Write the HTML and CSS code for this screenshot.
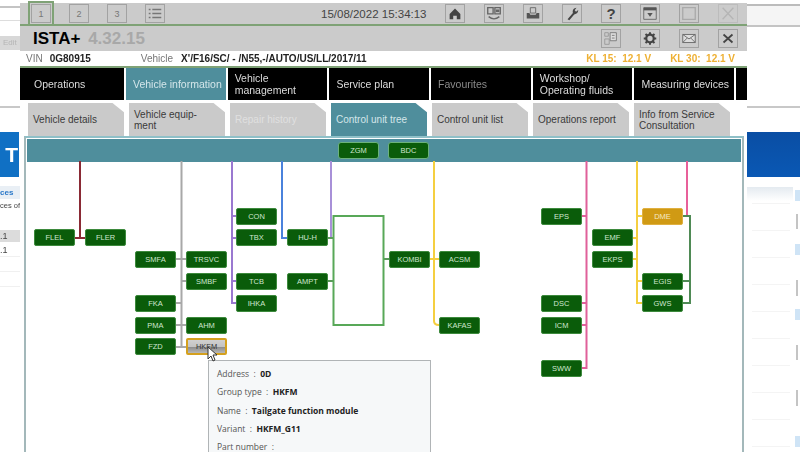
FILE: index.html
```html
<!DOCTYPE html>
<html lang="en">
<head>
  <meta charset="UTF-8">
  <title>ISTA+</title>
  <link rel="stylesheet" href="styles.css">
</head>
<body>
<div class="page">

  <!-- what is visible of the window behind, left -->
  <div class="side-left">
    <div class="sl-lines"></div>
    <div class="sl-edit">Edit</div>
    <div class="sl-rule"></div>
    <div class="sl-logo">T</div>
    <div class="sl-link">ces</div>
    <div class="sl-text">ces of</div>
    <div class="sl-sel">.1</div>
    <div class="sl-row">.1</div>
    <div class="sl-row"></div>
    <div class="sl-row"></div>
  </div>

  <div class="app">
    <div class="topbar">
      <div class="tools-left">
        <div class="tool tool-active">1</div>
        <div class="tool">2</div>
        <div class="tool">3</div>
        <div class="tool">
          <svg viewBox="0 0 20 19" width="18" height="17"><path d="M3 5h2M7 5h10M3 9.500h2M7 9.500h10M3 14h2M7 14h10" stroke="#777" stroke-width="1.500" fill="none"/></svg>
        </div>
      </div>
      <div class="clock">15/08/2022 15:34:13</div>
      <div class="tools-right">
        <div class="tool"><svg viewBox="0 0 20 19" width="18" height="17"><path d="M10 4 4 10v6h4v-4h4v4h4v-6z" fill="#444"/></svg></div>
        <div class="tool"><svg viewBox="0 0 20 19" width="18" height="17"><path d="M3 3h6v7H3zM11 3h6v7h-6z" fill="none" stroke="#666" stroke-width="1.500"/><path d="M4 13q6 5 12 0" fill="none" stroke="#666" stroke-width="1.500"/><path d="M12 5h4v3h-4z" fill="#666"/></svg></div>
        <div class="tool"><svg viewBox="0 0 20 19" width="18" height="17"><path d="M7 3h6v6H7z" fill="none" stroke="#666"/><path d="M3 9h3l1 2h6l1-2h3v6H3z" fill="#555"/></svg></div>
        <div class="tool"><svg viewBox="0 0 20 19" width="18" height="17"><path d="M5 16 11 9q-1-4 2-5.500l2-.5-2 3 1.500 1.500 2.500-2q0 4-4.500 5L7 17z" fill="#444"/></svg></div>
        <div class="tool tool-help">?</div>
        <div class="tool"><svg viewBox="0 0 20 19" width="18" height="17"><path d="M3 3h14v13H3z" fill="none" stroke="#666"/><path d="M3 3h14v3H3z" fill="#555"/><path d="M7 9h6l-3 4z" fill="#555"/></svg></div>
        <div class="tool"><svg viewBox="0 0 20 19" width="18" height="17"><path d="M3 3h14v13H3z" fill="none" stroke="#aaa" stroke-width="1.500"/></svg></div>
        <div class="tool tool-off"><svg viewBox="0 0 20 19" width="18" height="17"><path d="M4 3l12 13M16 3 4 16" stroke="#b5b5b5" stroke-width="1.500"/></svg></div>
      </div>
    </div>

    <div class="titlebar">
      <div class="brand">ISTA+ <span class="brand-version">4.32.15</span></div>
      <div class="tools-title">
        <div class="tool"><svg viewBox="0 0 20 19" width="18" height="17"><path d="M9 3h7v9H9z" fill="#ddd" stroke="#777"/><path d="M11 6h3M11 9h3" stroke="#777"/><path d="M3 3h4v4H3zM3 10h5v6H3z" fill="none" stroke="#999"/></svg></div>
        <div class="tool"><svg viewBox="0 0 20 19" width="18" height="17"><circle cx="10" cy="9.500" r="4.200" fill="none" stroke="#444" stroke-width="2.500"/><path d="M10 2.500v3M10 13.500v3M3 9.500h3M14 9.500h3M5 4.500l2 2M13 12.500l2 2M15 4.500l-2 2M7 12.500l-2 2" stroke="#444" stroke-width="2.200"/></svg></div>
        <div class="tool"><svg viewBox="0 0 20 19" width="18" height="17"><path d="M3 5h14v9H3z" fill="#ddd" stroke="#666"/><path d="M3 5l7 5 7-5M3 14l5-5M17 14l-5-5" fill="none" stroke="#666"/></svg></div>
        <div class="tool"><svg viewBox="0 0 20 19" width="18" height="17"><path d="M5 5l10 9M15 5 5 14" stroke="#444" stroke-width="2"/></svg></div>
      </div>
    </div>

    <div class="inforow">
      <span class="info-label info-vin">VIN</span>
      <span class="info-value info-vin-value">0G80915</span>
      <span class="info-label info-vehicle">Vehicle</span>
      <span class="info-value">X'/F16/SC/ - /N55,-/AUTO/US/LL/2017/11</span>
      <span class="kl kl-15">KL 15:&nbsp; 12.1 V</span>
      <span class="kl kl-30">KL 30:&nbsp; 12.1 V</span>
    </div>

    <div class="nav">
      <div class="nav-tab nav-first">Operations</div>
      <div class="nav-tab nav-active">Vehicle information</div>
      <div class="nav-tab">Vehicle<br>management</div>
      <div class="nav-tab">Service plan</div>
      <div class="nav-tab nav-off">Favourites</div>
      <div class="nav-tab">Workshop/<br>Operating fluids</div>
      <div class="nav-tab">Measuring devices</div>
      <div class="nav-tab nav-end"></div>
    </div>

    <div class="subnav">
      <div class="sub-tab">Vehicle details</div>
      <div class="sub-tab">Vehicle equip-<br>ment</div>
      <div class="sub-tab sub-off">Repair history</div>
      <div class="sub-tab sub-active">Control unit tree</div>
      <div class="sub-tab">Control unit list</div>
      <div class="sub-tab">Operations report</div>
      <div class="sub-tab">Info from Service<br>Consultation</div>
    </div>

    <div class="frame">
      <div class="band"></div>
      <div class="canvas">
        <!-- connectors, coordinates are the ones of the screenshot -->
        <svg class="wires" viewBox="26 138 718 314" width="718" height="314">
          <g fill="none" stroke-width="2">
            <path d="M80 161v77M75 238h10" stroke="#8a2a35"/>
            <path d="M181.500 161v186M176 259h10M181 281h5M176 303h6M176 325h10M176 347h10" stroke="#a8a8a8"/>
            <path d="M232 161v142h4M232 216h4M232 238h4M232 281h4" stroke="#9a78d0"/>
            <path d="M282 161v77h5" stroke="#4a82dc"/>
            <path d="M331 161v77h-3" stroke="#a890d8"/>
            <path d="M328 238h5M328 281h5M384 259h5" stroke="#5a9a5a"/>
            <path d="M434 161v160q0 4 5 4M430 259h9" stroke="#f5cf40"/>
            <path d="M586.500 161v207h-5M582 216h5M582 303h5M582 325h5" stroke="#e0609a"/>
            <path d="M637 161v142h5M632 238h5M632 259h5M637 216h5M637 281h5" stroke="#f5cf40"/>
            <path d="M687 161v55h-4" stroke="#e8609a"/>
            <path d="M683 216h7v87h-7M683 281h7" stroke="#4f8a55"/>
            <rect x="333.500" y="216" width="50" height="109" stroke="#58a858"/>
          </g>
        </svg>

        <div class="node col-a row-b">FLEL</div>
        <div class="node col-b row-b">FLER</div>
        <div class="node col-c row-c">SMFA</div>
        <div class="node col-d row-c">TRSVC</div>
        <div class="node col-d row-d">SMBF</div>
        <div class="node col-c row-e">FKA</div>
        <div class="node col-c row-f">PMA</div>
        <div class="node col-d row-f">AHM</div>
        <div class="node col-c row-g">FZD</div>
        <div class="node node-selected col-d row-g">HKFM</div>
        <div class="node col-e row-a">CON</div>
        <div class="node col-e row-b">TBX</div>
        <div class="node col-e row-d">TCB</div>
        <div class="node col-e row-e">IHKA</div>
        <div class="node col-f row-b">HU-H</div>
        <div class="node col-f row-d">AMPT</div>
        <div class="node col-g row-c">KOMBI</div>
        <div class="node col-h row-c">ACSM</div>
        <div class="node col-h row-f">KAFAS</div>
        <div class="node col-i row-a">EPS</div>
        <div class="node col-i row-e">DSC</div>
        <div class="node col-i row-f">ICM</div>
        <div class="node col-i row-h">SWW</div>
        <div class="node col-j row-b">EMF</div>
        <div class="node col-j row-c">EKPS</div>
        <div class="node node-amber col-k row-a">DME</div>
        <div class="node col-k row-d">EGIS</div>
        <div class="node col-k row-e">GWS</div>
        <div class="node node-gateway gw-zgm">ZGM</div>
        <div class="node node-gateway gw-bdc">BDC</div>

        <div class="tip">
          <div class="tip-row">Address &nbsp;: &nbsp;<b>0D</b></div>
          <div class="tip-row">Group type &nbsp;: &nbsp;<b>HKFM</b></div>
          <div class="tip-row">Name &nbsp;: &nbsp;<b>Tailgate function module</b></div>
          <div class="tip-row">Variant &nbsp;: &nbsp;<b>HKFM_G11</b></div>
          <div class="tip-row">Part number &nbsp;:</div>
        </div>

        <svg class="pointer" viewBox="0 0 12 17" width="12" height="17"><path d="M1 1v12l3-3 2 5 2-1-2-5h4z" fill="#fff" stroke="#333"/></svg>
      </div>
    </div>
  </div>

  <!-- window behind, right -->
  <div class="side-right">
    <div class="sr-top"></div>
    <div class="sr-rule"></div>
    <div class="sr-logo"></div>
    <div class="sr-body">
      <div class="sr-head"></div>
      <i class="chip"></i>
      <i class="bar gap-s"></i>
      <i class="chip gap-m"></i>
      <i class="bar gap-l"></i>
      <i class="chip gap-s"></i>
      <i class="bar gap-l"></i>
      <i class="bar gap-xl"></i>
      <i class="chip gap-xl"></i>
    </div>
  </div>
</div>
</body>
</html>
```

FILE: styles.css
```css
* {
  box-sizing: border-box;
}

html, body {
  margin: 0;
  height: 100%;
  overflow: hidden;
  background-color: white;
}

/* the reference is a video frame, everything is a bit soft */
.page {
  display: flex;
  width: 800px;
  height: 452px;
  overflow: hidden;
  font-family: "Liberation Sans", Arial, sans-serif;
  filter: blur(0.45px);
}

/* left sliver */
.side-left {
  width: 20px;
  flex: none;
  color: #444;
  font-size: 9px;
  overflow: hidden;
}

.sl-lines {
  height: 33px;
  margin-top: 6px;
  border-top: 2px solid #c4c4c4;
  border-bottom: 1px solid #ddd;
  background: linear-gradient(#fff 40%, #ddd 40%, #ddd 45%, #fff 45%);
}

.sl-edit {
  height: 14px;
  margin-top: -3px;
  padding-left: 3px;
  background-color: #d8d8d8;
  color: #b5b5b5;
  font-size: 8px;
  line-height: 14px;
}

.sl-rule {
  height: 2px;
  margin-top: 56px;
  background-color: #c8c8c8;
}

.sl-logo {
  width: 19px;
  height: 45px;
  margin-top: 24px;
  padding-right: 1px;
  background-color: #1070c4;
  color: white;
  font-size: 21px;
  font-weight: bold;
  line-height: 45px;
  text-align: right;
}

.sl-link {
  height: 13px;
  margin-top: 9px;
  background-color: #e9eff5;
  color: #2a78c8;
  font-size: 8px;
  font-weight: bold;
  line-height: 13px;
  text-align: right;
  padding-right: 7px;
}

.sl-text {
  height: 13px;
  margin-top: 2px;
  font-size: 7.500px;
  text-align: right;
  white-space: nowrap;
}

.sl-sel {
  height: 12px;
  margin-top: 16px;
  background-color: #dcdcdc;
  line-height: 12px;
}

.sl-row {
  height: 14px;
  margin-top: 1px;
  border-bottom: 1px solid #f0f0f0;
  line-height: 14px;
}

/* app window */
.app {
  width: 727px;
  flex: none;
  height: 452px;
  margin-top: 3px;
}

.topbar {
  display: flex;
  align-items: center;
  height: 23px;
  padding-left: 11px;
  background-color: #cbcbcb;
  border-bottom: 2px solid #7fa276;
}

.tools-left, .tools-right, .tools-title {
  display: flex;
  gap: 18px;
}

.tools-right, .tools-title {
  gap: 19px;
}

.tools-right {
  margin-left: auto;
  margin-right: 9px;
}

.tool {
  display: flex;
  align-items: center;
  justify-content: center;
  width: 20px;
  height: 19px;
  border: 1px solid #a2a2a2;
  color: #777;
  font-size: 9px;
}

.tool-active {
  outline: 2px solid #7fa276;
  outline-offset: 1px;
}

.tool-help {
  color: #444;
  font-size: 15px;
  font-weight: bold;
}

.tool-off {
  border-color: #bcbcbc;
}

.clock {
  margin-left: 156px;
  color: #444;
  font-size: 11.500px;
}

.titlebar {
  display: flex;
  align-items: center;
  height: 25px;
  padding-left: 13px;
  background-color: #cbcbcb;
}

.brand {
  color: black;
  font-size: 17px;
  font-weight: bold;
}

.brand-version {
  margin-left: 3px;
  color: #a8a8a8;
}

.tools-title {
  margin-left: auto;
  margin-right: 9px;
}

.inforow {
  display: flex;
  align-items: center;
  height: 15px;
  padding-left: 6px;
  background-color: white;
  font-size: 10px;
  white-space: nowrap;
}

.info-label {
  color: #777;
}

.info-value {
  color: #222;
  font-weight: bold;
}

.info-vin-value {
  margin-left: 7px;
}

.info-vehicle {
  margin-left: 50px;
  margin-right: 8px;
}

.kl {
  color: #eeb033;
  font-weight: bold;
}

.kl-15 {
  margin-left: auto;
}

.kl-30 {
  margin-left: 19px;
  margin-right: 12px;
}

.nav {
  display: flex;
  gap: 2px;
  height: 34px;
  border-top: 2px solid #7fa276;
}

.nav-tab {
  display: flex;
  align-items: center;
  width: 99.700px;
  flex: none;
  padding-left: 7px;
  background-color: black;
  color: #dcdcdc;
  font-size: 10.500px;
  line-height: 12px;
  white-space: nowrap;
}

.nav-first {
  width: 104px;
  padding-left: 14px;
}

.nav-active {
  background-color: #4f8e9c;
  color: #d4e6ea;
}

.nav-off {
  color: #8a8a8a;
}

.nav-end {
  width: 11px;
  padding: 0;
}

.subnav {
  display: flex;
  gap: 5px;
  height: 36px;
  padding-top: 3px;
  padding-left: 8px;
}

.sub-tab {
  display: flex;
  align-items: center;
  width: 96px;
  flex: none;
  padding-left: 5px;
  background-color: #cacaca;
  clip-path: polygon(0 0, 88% 0, 100% 28%, 100% 100%, 0 100%);
  color: #3a3a3a;
  font-size: 10px;
  line-height: 11px;
  white-space: nowrap;
}

.sub-off {
  color: #e0e0e0;
}

.sub-active {
  background-color: #4f8e9c;
  color: #d4e6ea;
}

.frame {
  position: relative;
  width: 720px;
  height: 330px;
  margin-left: 4px;
  border: 2px solid #a3b8ba;
  border-top-color: #8fc0c8;
  background-color: white;
}

.band {
  height: 23px;
  margin: 1px 1px 0;
  background-color: #4f8e9c;
}

/* free canvas for the control unit tree */
.canvas {
  position: absolute;
  top: 0;
  left: 0;
  width: 716px;
  height: 328px;
  overflow: hidden;
}

.wires {
  position: absolute;
  top: 0;
  left: 0;
}

.node {
  position: absolute;
  display: flex;
  align-items: center;
  justify-content: center;
  width: 41px;
  height: 17px;
  background-color: #0a5c0a;
  border: 1px solid #3d8a3d;
  border-radius: 2px;
  color: #cfe6cf;
  font-size: 7.500px;
}

.node-amber {
  background-color: #d09a14;
  border-color: #e0b040;
  color: #f5e8c4;
}

.node-selected {
  background: linear-gradient(#d0d0d0, #c4c4c4 50%, #8c8c8c 55%, #b8b8b8);
  border: 2.500px solid #d4a01e;
  color: #333;
}

.node-gateway {
  top: 4px;
  border-color: #6cb27c;
  border-radius: 3px;
}

.gw-zgm { left: 312px; }
.gw-bdc { left: 362px; }

.col-a { left: 8px; }
.col-b { left: 59px; }
.col-c { left: 109px; }
.col-d { left: 160px; }
.col-e { left: 210px; }
.col-f { left: 261px; }
.col-g { left: 363px; }
.col-h { left: 413px; }
.col-i { left: 515px; }
.col-j { left: 566px; }
.col-k { left: 616px; }

.row-a { top: 70px; }
.row-b { top: 91px; }
.row-c { top: 113px; }
.row-d { top: 135px; }
.row-e { top: 157px; }
.row-f { top: 179px; }
.row-g { top: 200px; }
.row-h { top: 222px; }

.tip {
  position: absolute;
  top: 222px;
  left: 182px;
  width: 223px;
  height: 110px;
  padding: 4px 8px;
  background-color: #f6f8f9;
  border: 1px solid #b0b4b6;
  color: #555;
  font-family: "Open Sans", sans-serif;
  font-size: 8.500px;
}

.tip-row {
  height: 18.300px;
  line-height: 18px;
  white-space: nowrap;
}

.tip-row b {
  color: #222;
}

.pointer {
  position: absolute;
  top: 208px;
  left: 181px;
}

/* right sliver */
.side-right {
  width: 53px;
  flex: none;
  overflow: hidden;
}

.sr-top {
  height: 23px;
  margin-top: 4px;
  background-color: #f5f5f5;
  border-top: 2px solid #bcbcbc;
  border-bottom: 2px solid #c4c4c4;
}

.sr-rule {
  height: 2px;
  margin-top: 79px;
  background-color: #c8c8c8;
}

.sr-logo {
  height: 45px;
  margin-top: 24px;
  background: linear-gradient(#0a4ea4, #0a58b4);
}

.sr-body {
  display: flex;
  flex-direction: column;
  align-items: flex-end;
  height: 270px;
  padding-top: 13px;
  background: repeating-linear-gradient(transparent 0 26px, #f4f4f4 26px 27px) no-repeat 5px 0 / 38px 100%;
}

.sr-head {
  align-self: flex-start;
  width: 46px;
  height: 14px;
  margin-top: -3px;
  margin-bottom: -11px;
  background: linear-gradient(#e4eaf0, #fff);
}

.chip {
  width: 5px;
  height: 11px;
  background-color: #cfe4f6;
}

.bar {
  width: 2px;
  height: 16px;
  margin-right: 2px;
  background-color: #c4c4c4;
}

.gap-s { margin-top: 13px; }
.gap-m { margin-top: 15px; }
.gap-l { margin-top: 25px; }
.gap-xl { margin-top: 30px; }
```
